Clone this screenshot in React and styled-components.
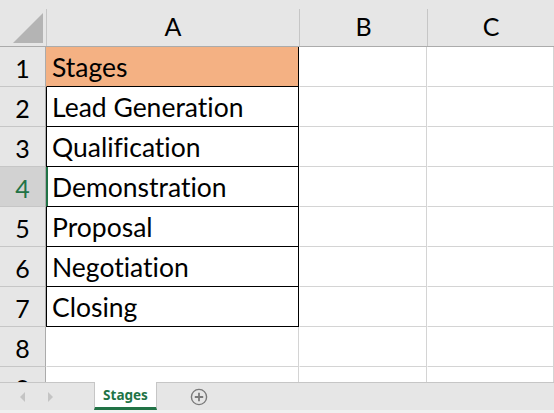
import styled, { createGlobalStyle } from "styled-components";

const GlobalStyle = createGlobalStyle`
    html, body { margin:0; padding:0; background:#fff; }
    body { font-family: Lato, "Liberation Sans", sans-serif; font-variant-ligatures:none; }
`

const columns = [
    { name: "A", width: 253 },
    { name: "B", width: 128 },
    { name: "C", width: 127 },
];

const rows = [
    { n: 1, text: "Stages", fill: true, boxed: true },
    { n: 2, text: "Lead Generation", boxed: true },
    { n: 3, text: "Qualification", boxed: true },
    { n: 4, text: "Demonstration", boxed: true, active: true },
    { n: 5, text: "Proposal", boxed: true },
    { n: 6, text: "Negotiation", boxed: true },
    { n: 7, text: "Closing", boxed: true },
    { n: 8 },
    { n: 9 },
];

const App = () => {
    return (
        <Page>
            <GlobalStyle />
            <Sheet>
                <HeaderRow>
                    <Corner>
                        <svg width="31" height="31" viewBox="0 0 31 31">
                            <polygon points="30,0 30,30 0,30" fill="#b4b4b4" />
                        </svg>
                    </Corner>
                    {columns.map((c) => (
                        <ColHeader key={c.name} $w={c.width}>{c.name}</ColHeader>
                    ))}
                </HeaderRow>
                {rows.map((r) => (
                    <Row key={r.n}>
                        <RowHeader $active={r.active}>{r.n}</RowHeader>
                        <Cell $w={columns[0].width} $fill={r.fill} $boxed={r.boxed} $active={r.active} $first={r.n === 1}>
                            {r.text}
                        </Cell>
                        <Cell $w={columns[1].width} />
                        <Cell $w={columns[2].width} />
                    </Row>
                ))}
            </Sheet>
            <TabBar>
                <Nav>
                    <Arrow viewBox="0 0 6 10"><polygon points="5,0 5,10 0,5" /></Arrow>
                    <Arrow viewBox="0 0 6 10"><polygon points="1,0 1,10 6,5" /></Arrow>
                </Nav>
                <Tab>Stages</Tab>
                <AddButton>
                    <svg width="18" height="18" viewBox="0 0 18 18">
                        <circle cx="9" cy="9" r="7.6" fill="none" stroke="#7a7a7a" strokeWidth="1.4" />
                        <path d="M9 4.8v8.4M4.8 9h8.4" stroke="#7a7a7a" strokeWidth="1.8" />
                    </svg>
                </AddButton>
            </TabBar>
        </Page>
    );
}

export default App;


const Page = styled.div`
    width:554px;
    height:413px;
    overflow:hidden;
    display:flex;
    flex-direction:column;
    background:#fff;
`

const Sheet = styled.div`
    height:382px;
    overflow:hidden;
    flex-shrink:0;
`

const HeaderRow = styled.div`
    display:flex;
    height:46px;
    background:#e6e6e6;
    border-bottom:1px solid #ababab;
`

const Corner = styled.div`
    width:46px;
    flex-shrink:0;
    display:flex;
    padding:13px 0 0 13px;
    box-sizing:border-box;
`

const ColHeader = styled.div`
    width:${(p) => p.$w}px;
    flex-shrink:0;
    margin-top:9px;
    border-left:1px solid #c6c6c6;
    display:flex;
    align-items:center;
    justify-content:center;
    font-size:25px;
    color:#000;
    padding-bottom:3px;
    box-sizing:border-box;
`

const Row = styled.div`
    display:flex;
    height:40px;
`

const RowHeader = styled.div`
    width:46px;
    flex-shrink:0;
    box-sizing:border-box;
    background:${(p) => (p.$active ? "#d2d2d2" : "#e6e6e6")};
    color:${(p) => (p.$active ? "#217346" : "#000")};
    border-right:1px solid #ababab;
    border-bottom:1px solid #c6c6c6;
    display:flex;
    align-items:center;
    justify-content:center;
    font-size:25px;
    padding-top:3px;
`

const Cell = styled.div`
    width:${(p) => p.$w}px;
    flex-shrink:0;
    box-sizing:border-box;
    background:${(p) => (p.$fill ? "#f4b183" : "#fff")};
    border-right:1px solid ${(p) => (p.$boxed ? "#000" : "#d4d4d4")};
    border-bottom:1px solid ${(p) => (p.$boxed ? "#000" : "#d4d4d4")};
    border-left:1px solid ${(p) => (p.$active ? "#217346" : p.$boxed && !p.$first ? "#000" : "transparent")};
    box-shadow:${(p) => (p.$active ? "inset 1px 0 0 #217346" : "none")};
    display:flex;
    align-items:flex-end;
    padding:0 0 2px 5px;
    font-size:26.5px;
    line-height:1.2;
    color:#000;
    white-space:nowrap;
    overflow:hidden;
`

const TabBar = styled.div`
    flex:1;
    display:flex;
    align-items:stretch;
    background:#e6e6e6;
    border-top:1px solid #c6c6c6;
    border-bottom:3px solid #f0f0f0;
    box-sizing:border-box;
`

const Nav = styled.div`
    width:94px;
    display:flex;
    align-items:center;
    gap:21px;
    padding-left:20px;
    box-sizing:border-box;
`

const Arrow = styled.svg`
    width:6px;
    height:10px;
    fill:#c4c4c4;
`

const Tab = styled.div`
    width:63px;
    margin-top:-1px;
    box-sizing:border-box;
    background:#fff;
    border-left:1px solid #c6c6c6;
    border-right:1px solid #c6c6c6;
    border-bottom:3px solid #217346;
    display:flex;
    align-items:center;
    justify-content:center;
    font-family:"Noto Sans", "Liberation Sans", sans-serif;
    font-weight:700;
    font-size:13.5px;
    color:#217346;
    padding-top:1px;
`

const AddButton = styled.div`
    margin-left:33px;
    display:flex;
    align-items:center;
`
